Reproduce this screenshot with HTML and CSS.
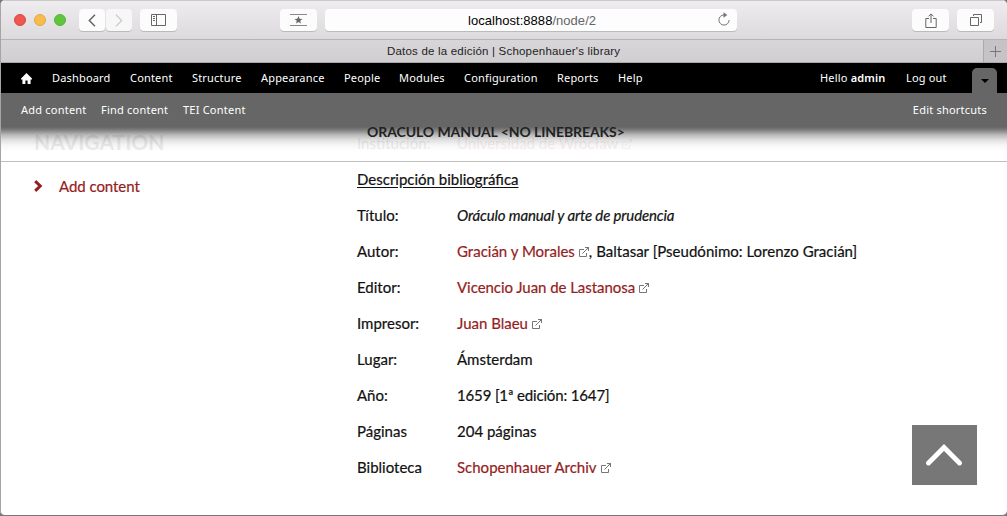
FILE: index.html
```
<!DOCTYPE html>
<html lang="es">
<head>
<meta charset="utf-8">
<title>Datos de la edición | Schopenhauer's library</title>
<link rel="stylesheet" href="styles.css">
</head>
<body>
<svg class="defs" aria-hidden="true">
  <symbol id="external" viewBox="0 0 12 12"><path d="M6 3.5H1.5v7h7V7M4.5 7.5 10 2M7 1.5h3.5V5" fill="none" stroke="#777" stroke-width="1"/><path d="M7.5 1H11v3.5z" fill="#777"/></symbol>
</svg>
<div class="window">
  <header class="chrome">
    <div class="lights"><i class="light red"></i><i class="light yellow"></i><i class="light green"></i></div>
    <div class="history">
      <div class="btn back"><svg width="8" height="13" viewBox="0 0 8 13"><path d="M7 .8 1.3 6.5 7 12.2" fill="none" stroke="#666" stroke-width="1.5"/></svg></div>
      <div class="btn forward"><svg width="8" height="13" viewBox="0 0 8 13"><path d="M1 .8 6.7 6.5 1 12.2" fill="none" stroke="#ccc" stroke-width="1.3"/></svg></div>
    </div>
    <div class="btn sidebar-btn"><svg width="15" height="12" viewBox="0 0 15 12"><path d="M.5.5h14v11H.5zM5.5.5v11M2 2.5h2M2 4.5h2M2 6.5h2" fill="none" stroke="#666"/></svg></div>
    <div class="btn favorites"><svg width="17" height="12" viewBox="0 0 17 12"><path d="M0 .5h17M0 11.5h17" stroke="#888"/><path d="m8.5 2 1.1 2.8 2.9.1-2.3 1.8.8 2.8-2.5-1.6L6 9.5l.8-2.8-2.3-1.8 2.9-.1z" fill="#666"/></svg></div>
    <div class="address"><span class="url"><b>localhost:8888</b>/node/2</span><svg class="reload" width="12" height="14" viewBox="0 0 12 14"><path d="M6 2.9A5.1 5.1 0 1 0 11.1 8" fill="none" stroke="#777"/><path d="M5.5.2 9.3 3 5.5 5.8z" fill="#777"/></svg></div>
    <div class="btn share"><svg width="12" height="15" viewBox="0 0 12 15"><path d="M4 5.5H.8v9h10.4v-9H8M6 10V1M3.5 3.4 6 .9l2.5 2.5" fill="none" stroke="#666"/></svg></div>
    <div class="btn tabs-btn"><svg width="12" height="12" viewBox="0 0 12 12"><path d="M.5 3.5h8v8h-8zM3.5 2V.5h8v8H10" fill="none" stroke="#666"/></svg></div>
  </header>
  <div class="tabbar">
    <div class="tab">Datos de la edición | Schopenhauer's library</div>
    <div class="new-tab"><svg width="11" height="11" viewBox="0 0 11 11"><path d="M5.5 0v11M0 5.5h11" stroke="#777"/></svg></div>
  </div>
  <nav class="admin">
    <svg class="home" width="11" height="11" viewBox="0 0 11 11"><path d="M5.5 0 11 5.5v1H9.6V11h-3V7.5H4.4V11h-3V6.5H0v-1z" fill="#fff"/></svg>
    <div class="menu"><span>Dashboard</span><span>Content</span><span>Structure</span><span>Appearance</span><span>People</span><span>Modules</span><span>Configuration</span><span>Reports</span><span>Help</span></div>
    <div class="account"><span class="hello">Hello <b>admin</b></span><span class="logout">Log out</span></div>
    <div class="toggle"><svg width="8" height="4" viewBox="0 0 8 4"><path d="M0 0h8L4 4z"/></svg></div>
  </nav>
  <nav class="shortcuts">
    <span class="s1">Add content</span><span class="s2">Find content</span><span class="s3">TEI Content</span><span class="edit">Edit shortcuts</span>
  </nav>
  <section class="sticky">
    <div class="ghosts"><h2 class="ghost-nav">NAVIGATION</h2><span class="ghost-label">Institución:</span><span class="ghost-value">Universidad de Wrocław<svg class="ext"><use href="#external"/></svg></span></div>
    <div class="shade"></div>
    <h1 class="page-title">ORACULO MANUAL &lt;NO LINEBREAKS&gt;</h1>
  </section>
  <main class="content">
    <aside class="side"><svg width="9" height="12" viewBox="0 0 9 12"><path d="m1.2 1.2 5 4.8-5 4.8" fill="none" stroke="#951d1d" stroke-width="3"/></svg><a>Add content</a></aside>
    <article class="details">
      <h3 class="heading">Descripción bibliográfica</h3>
      <dl class="fields">
        <dt>Título:</dt><dd><em>Oráculo manual y arte de prudencia</em></dd>
        <dt>Autor:</dt><dd><a>Gracián y Morales</a><svg class="ext"><use href="#external"/></svg><span class="rest">, Baltasar [Pseudónimo: Lorenzo Gracián]</span></dd>
        <dt>Editor:</dt><dd><a class="editor">Vicencio Juan de Lastanosa</a><svg class="ext"><use href="#external"/></svg></dd>
        <dt>Impresor:</dt><dd><a>Juan Blaeu</a><svg class="ext"><use href="#external"/></svg></dd>
        <dt>Lugar:</dt><dd>Ámsterdam</dd>
        <dt>Año:</dt><dd class="year">1659 [1ª edición: 1647]</dd>
        <dt>Páginas</dt><dd>204 páginas</dd>
        <dt>Biblioteca</dt><dd><a>Schopenhauer Archiv</a><svg class="ext"><use href="#external"/></svg></dd>
      </dl>
    </article>
  </main>
  <div class="to-top"><svg width="36" height="22" viewBox="0 0 36 22"><path d="M2.5 19 18 3.5 33.5 19" fill="none" stroke="#fff" stroke-width="4.8" stroke-linecap="round"/></svg></div>
</div>
</body>
</html>
```
FILE: styles.css
```
* { box-sizing: border-box; }
body { margin: 0; background: #777; font-family: Lato, sans-serif; }
svg { display: block; flex: none; }
.defs { position: absolute; width: 0; height: 0; }
.window { position: relative; width: 1007px; height: 516px; overflow: hidden; background: #fff; border: solid #a5a5a5; border-width: 0 0 1px 1px; border-bottom-color: #777; border-radius: 5px; display: flex; flex-direction: column; }
.chrome { height: 40px; flex: none; display: flex; align-items: flex-start; padding: 8px 13px 0; background: linear-gradient(#eeecee, #dcdadc); border-top: 1px solid #c9c9c9; border-bottom: 1px solid #b4b4b4; }
.lights { display: flex; gap: 8px; margin-top: 5px; width: 65px; }
.light { width: 12px; height: 12px; border-radius: 50%; }
.red { background: #ed5850; border: 1px solid #d94640; }
.yellow { background: #f6bd4c; border: 1px solid #e2a840; }
.green { background: #61c43e; border: 1px solid #55b534; }
.history { display: flex; gap: 1px; margin-right: 8px; }
.btn { width: 37px; height: 22px; background: #fcfcfc; border-radius: 4px; box-shadow: 0 1px 0 #bbb; display: flex; align-items: center; justify-content: center; }
.history .btn { width: 26px; }
.history .forward { background: #f7f7f7; }
.favorites { margin-left: 103px; }
.address { width: 412px; height: 22px; margin-left: 8px; background: #fdfdfd; border-radius: 4px; box-shadow: 0 1px 0 #bbb; display: flex; align-items: center; font: 13px/22px "Liberation Sans", Arial, sans-serif; color: #666; }
.url { padding: 2px 0 0 143px; letter-spacing: .04px; }
.url b { font-weight: 400; color: #000; }
.reload { margin: 0 7px 3px auto; }
.share { margin-left: 175px; }
.tabs-btn { margin-left: 8px; }
.tabbar { height: 23px; flex: none; display: flex; background: linear-gradient(#d8d6d8, #d0ced0); border-bottom: 1px solid #aaa; font: 11.5px/23px "Liberation Sans", Arial, sans-serif; letter-spacing: .2px; color: #222; }
.tab { flex: 1; padding-left: 386px; }
.new-tab { width: 24px; border-left: 1px solid #aaa; background: #c5c3c5; display: flex; align-items: center; justify-content: center; }
.admin { height: 30px; flex: none; background: #000; color: #fff; display: flex; align-items: center; font: 11px/30px "Noto Sans", sans-serif; letter-spacing: .18px; padding-left: 20px; }
.menu { margin-left: 20px; display: grid; grid-template-columns: 78px 62px 69px 83px 55px 65px 93px 61px 202px; }
.account { display: flex; width: 152px; }
.hello { width: 86px; }
.hello b { font-weight: 600; }
.toggle { width: 25px; height: 25px; align-self: flex-end; background: #666; border-radius: 5px 5px 0 0; display: flex; align-items: center; justify-content: center; }
.shortcuts { height: 34px; flex: none; background: #666; color: #fff; font: 11px/34px "Noto Sans", sans-serif; letter-spacing: .22px; display: flex; padding: 0 20px; }
.s1 { width: 80px; }
.s2 { width: 82px; }
.edit { margin-left: auto; }
.sticky { position: relative; height: 35px; flex: none; overflow: hidden; border-bottom: 1px solid #c0c0c0; }
.ghosts { display: grid; grid-template-columns: 323px 100px 1fr; padding-left: 33px; font-size: 15px; line-height: 32px; opacity: .07; }
.ghost-nav { margin: 0; font-size: 21px; line-height: 29px; font-weight: 700; }
.ghost-value { color: #951d1d; }
.shade { position: absolute; inset: 0; background: linear-gradient(rgba(0,0,0,.6), rgba(0,0,0,.5) 3px, rgba(0,0,0,.27) 8px, rgba(0,0,0,.12) 13px, rgba(0,0,0,.04) 18px, transparent 24px); }
.page-title { position: absolute; left: 366px; top: -5px; margin: 0; font-size: 14px; line-height: 20px; font-weight: 700; letter-spacing: -.08px; color: #222; white-space: nowrap; }
.content { display: flex; margin-top: -1px; font-size: 15px; line-height: 36px; color: #111; -webkit-text-stroke: .2px; }
.side { width: 356px; display: flex; align-items: center; height: 36px; margin-top: 7px; padding-left: 33px; gap: 16px; }
.side a { letter-spacing: -.05px; }
.details { flex: 1; }
.heading { margin: 0; font-size: 15px; font-weight: 400; text-decoration: underline; text-underline-offset: 2px; }
.fields { margin: 0; display: grid; grid-template-columns: 100px 1fr; grid-auto-rows: 36px; }
dd { margin: 0; white-space: nowrap; }
em { letter-spacing: -.14px; }
.year { letter-spacing: -.15px; }
.editor { letter-spacing: -.05px; }
.rest { margin-left: -1px; letter-spacing: .02px; }
a { color: #951d1d; }
.ext { display: inline-block; width: 12px; height: 12px; margin-left: 3px; vertical-align: -1px; }
.to-top { position: absolute; right: 30px; top: 425px; width: 65px; height: 60px; padding-right: 2px; background: #777; display: flex; align-items: center; justify-content: center; }
```
